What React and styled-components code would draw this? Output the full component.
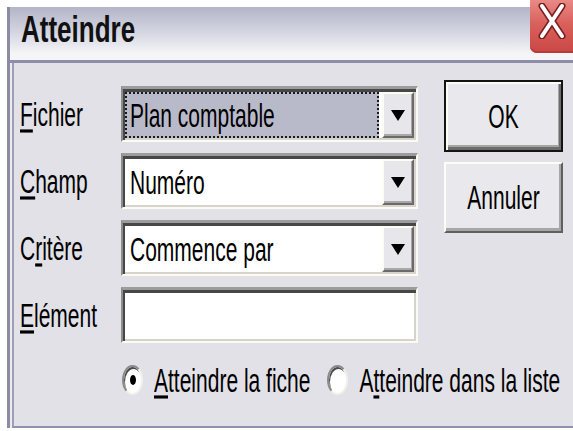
import React from "react";
import styled, { createGlobalStyle } from "styled-components";

const GlobalStyle = createGlobalStyle`
  html, body {
    margin: 0;
    background: #ffffff;
    overflow: hidden;
  }
  body {
    font-family: "Liberation Sans", Arial, sans-serif;
    color: #000;
  }
`;

const Window = styled.div`
  margin: 7px 0 0 7px;
  width: 566px;
  height: 421px;
  box-sizing: border-box;
  display: flex;
  flex-direction: column;
  border-left: 3px solid #8b8ba3;
  background: #ebebf1;
`;

const TitleBar = styled.div`
  flex: none;
  height: 53px;
  display: flex;
  align-items: flex-start;
  justify-content: space-between;
  background: linear-gradient(#b3b5c8, #d6d7e2 50%, #f5f5f8 88%);
  border-bottom: 3px solid #8e8eaa;
`;

const Title = styled.span`
  display: inline-block;
  margin: 9px 0 0 11px;
  font-size: 26px;
  line-height: 26px;
  font-weight: bold;
  color: #111;
  transform: scaleY(1.4);
`;

const CloseButton = styled.div`
  width: 43px;
  height: 53px;
  margin-top: -7px;
  display: flex;
  align-items: flex-start;
  justify-content: center;
  padding-top: 3px;
  box-sizing: border-box;
  border-bottom-left-radius: 7px;
  background: linear-gradient(#e98a86, #d9605c 45%, #c94744);
  box-shadow: inset 0 -2px 0 #b83b3a;
`;

const Body = styled.div`
  flex: 1;
  display: flex;
  margin-left: 2px;
  padding: 17px 0 0 6px;
  border-left: 2px solid #9d9db5;
  border-bottom: 2px solid #9292ac;
  background: #e2e1e7;
`;

const Form = styled.div`
  flex: none;
  width: 398px;
  display: flex;
  flex-direction: column;
  gap: 11px;
  margin-top: 6px;
`;

const Row = styled.div`
  display: flex;
  align-items: center;
  height: 56px;
`;

const Text = styled.span`
  display: inline-block;
  font-size: 21px;
  line-height: 21px;
  white-space: nowrap;
  transform: scaleY(1.57);
`;

const Label = styled(Text)`
  width: 101px;
`;

const Sunken = styled.div`
  width: 297px;
  height: 56px;
  box-sizing: border-box;
  display: flex;
  padding: 3px 2px 2px 2px;
  border-style: solid;
  border-width: 3px 2px 2px 2px;
  border-color: #9c9c9c #fbfbf2 #fbfbf2 #8c8c8c;
  box-shadow: inset 2px 3px 0 #474747, inset -2px -2px 0 #d6d4cc;
  background: #ffffff;
`;

const Value = styled.div`
  flex: 1;
  display: flex;
  align-items: center;
  box-sizing: border-box;
  margin-right: 3px;
  padding-left: ${({ $selected }) => ($selected ? "3px" : "5px")};
  background: ${({ $selected }) => ($selected ? "#b9bac9" : "transparent")};
  border: ${({ $selected }) => ($selected ? "2px dotted #1a1a1a" : "none")};
`;

const ArrowButton = styled.div`
  width: 32px;
  box-sizing: border-box;
  display: flex;
  align-items: center;
  justify-content: center;
  border-style: solid;
  border-width: 2px;
  border-color: #fdfdf6 #6a6a6a #6a6a6a #fdfdf6;
  box-shadow: inset -1px -2px 0 #a8a8a8;
  background: #e7e6eb;
`;

const Arrow = styled.div`
  width: 0;
  height: 0;
  border-left: 7px solid transparent;
  border-right: 7px solid transparent;
  border-top: 11px solid #000;
`;

const Buttons = styled.div`
  flex: none;
  display: flex;
  flex-direction: column;
  gap: 10px;
  margin-left: 26px;
`;

const PushButton = styled.div`
  width: 119px;
  height: ${({ $default }) => ($default ? "72px" : "71px")};
  box-sizing: border-box;
  display: flex;
  align-items: center;
  justify-content: center;
  background: #e9e8ec;
  border-style: solid;
  border-width: 2px;
  border-color: ${({ $default }) =>
    $default ? "#141414" : "#fdfdf6 #5f5f5f #5f5f5f #fdfdf6"};
  box-shadow: ${({ $default }) =>
    $default
      ? "inset 2px 2px 0 #fdfdf6, inset -2px -3px 0 #6c6c6c, inset -3px -5px 0 #a6a6a6"
      : "inset -2px -3px 0 #a6a6a6"};
`;

const RadioRow = styled.div`
  display: flex;
  align-items: center;
  height: 38px;
  margin: 7px 0 0 102px;
  white-space: nowrap;
`;

const Option = styled.div`
  flex: none;
  display: flex;
  align-items: center;
  gap: 11px;
  margin-right: 17px;
`;

const RadioMark = styled.div`
  width: 21px;
  height: 30px;
  box-sizing: border-box;
  border-radius: 50%;
  border: 2px solid;
  border-color: #8a8a8a #f2f2ea #f2f2ea #8a8a8a;
  box-shadow: inset 1px 2px 0 #4a4a4a;
  background: #ffffff;
  display: flex;
  align-items: center;
  justify-content: center;
`;

const Dot = styled.div`
  width: 6px;
  height: 10px;
  border-radius: 50%;
  background: #000;
`;

const fields = [
  { key: "F", rest: "ichier", value: "Plan comptable", selected: true },
  { key: "C", rest: "hamp", value: "Numéro" },
  { pre: "C", key: "r", rest: "itère", value: "Commence par" },
];

const CloseGlyph = () => (
  <svg width="28" height="36" viewBox="0 0 28 36">
    <path d="M4 3 L24 33 M24 3 L4 33" stroke="#7a1f1f" strokeWidth="7" strokeLinecap="round" />
    <path d="M4 3 L24 33 M24 3 L4 33" stroke="#ffffff" strokeWidth="4" strokeLinecap="round" />
  </svg>
);

const App = () => {
  return (
    <>
      <GlobalStyle />
      <Window>
        <TitleBar>
          <Title>Atteindre</Title>
          <CloseButton>
            <CloseGlyph />
          </CloseButton>
        </TitleBar>
        <Body>
          <Form>
            {fields.map(f => (
              <Row key={f.value}>
                <Label>
                  {f.pre}
                  <u>{f.key}</u>
                  {f.rest}
                </Label>
                <Sunken>
                  <Value $selected={f.selected}>
                    <Text>{f.value}</Text>
                  </Value>
                  <ArrowButton>
                    <Arrow />
                  </ArrowButton>
                </Sunken>
              </Row>
            ))}
            <Row>
              <Label>
                <u>E</u>lément
              </Label>
              <Sunken />
            </Row>
            <RadioRow>
              <Option>
                <RadioMark>
                  <Dot />
                </RadioMark>
                <Text>
                  <u>A</u>tteindre la fiche
                </Text>
              </Option>
              <Option>
                <RadioMark />
                <Text>
                  A<u>t</u>teindre dans la liste
                </Text>
              </Option>
            </RadioRow>
          </Form>
          <Buttons>
            <PushButton $default>
              <Text>OK</Text>
            </PushButton>
            <PushButton>
              <Text>Annuler</Text>
            </PushButton>
          </Buttons>
        </Body>
      </Window>
    </>
  );
};

export default App;
